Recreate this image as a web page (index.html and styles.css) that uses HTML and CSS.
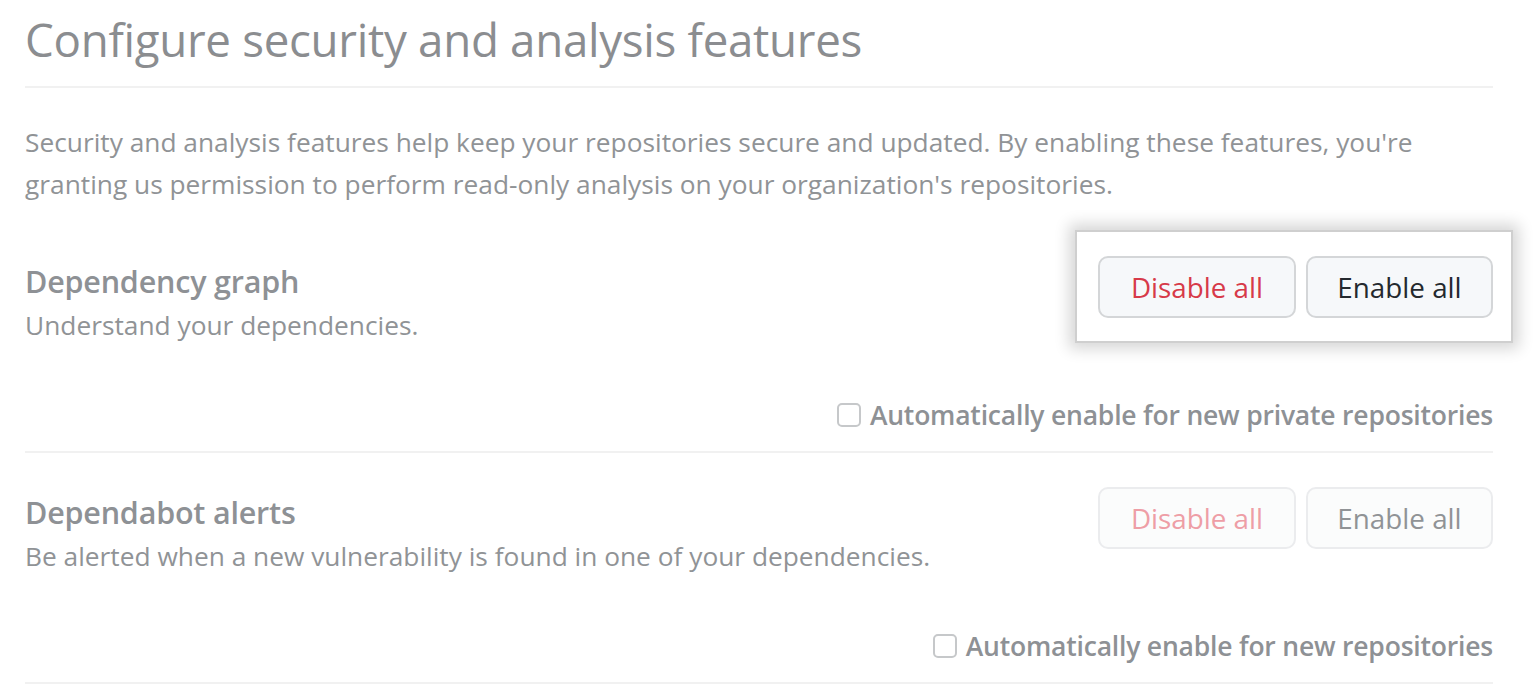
FILE: index.html
```html
<!DOCTYPE html>
<html>
<head>
<meta charset="utf-8">
<link rel="stylesheet" href="styles.css">
</head>
<body>
<div class="page">
  <h1 class="title">Configure security and analysis features</h1>
  <p class="intro">Security and analysis features help keep your repositories secure and updated. By enabling these features, you're granting us permission to perform read-only analysis on your organization's repositories.</p>

  <div class="section first">
    <div class="row">
      <div class="info">
        <h2 class="heading">Dependency graph</h2>
        <p class="desc">Understand your dependencies.</p>
      </div>
      <div class="buttons highlight">
        <button class="btn danger">Disable all</button>
        <button class="btn enable">Enable all</button>
      </div>
    </div>
    <label class="auto"><span class="box"></span>Automatically enable for new private repositories</label>
  </div>

  <div class="section">
    <div class="row">
      <div class="info">
        <h2 class="heading">Dependabot alerts</h2>
        <p class="desc">Be alerted when a new vulnerability is found in one of your dependencies.</p>
      </div>
      <div class="buttons faded">
        <button class="btn danger">Disable all</button>
        <button class="btn enable">Enable all</button>
      </div>
    </div>
    <label class="auto"><span class="box"></span>Automatically enable for new repositories</label>
  </div>
</div>
</body>
</html>
```

FILE: styles.css
```css
html, body {
  margin: 0;
  padding: 0;
  background: #ffffff;
}
body {
  font-family: "Open Sans", "Noto Sans", sans-serif;
  color: #8e9195;
}
.page {
  width: 1468px;
  margin-left: 25px;
}
.title {
  margin: 0;
  padding-top: 8px;
  font-size: 45.7px;
  line-height: 62px;
  font-weight: 400;
  color: #8b8d90;
  letter-spacing: -0.3px;
  border-bottom: 2px solid #f1f1f1;
  padding-bottom: 16px;
}
.intro {
  margin: 33px 0 0 0;
  font-size: 26.3px;
  line-height: 42px;
  color: #909396;
}
.section {
  border-bottom: 2px solid #f1f1f1;
  height: 229px;
  display: flex;
  flex-direction: column;
}
.section.first {
  margin-top: 17px;
}
.row {
  display: flex;
  justify-content: space-between;
  align-items: flex-start;
  padding-top: 34px;
}
.info {
  padding-top: 5px;
}
.heading {
  margin: 0;
  font-size: 30.5px;
  line-height: 40px;
  font-weight: 600;
  color: #8e9195;
  letter-spacing: -0.2px;
}
.desc {
  margin: 4px 0 0 0;
  font-size: 26.3px;
  line-height: 40px;
  color: #909396;
}
.buttons {
  display: flex;
  gap: 10px;
  position: relative;
}
.btn {
  font-family: inherit;
  font-size: 27.8px;
  font-weight: 400;
  height: 62px;
  padding: 0;
  border: 2px solid #d4d6d8;
  border-radius: 10px;
  background: #f6f8fa;
  color: #24292e;
  position: relative;
  z-index: 1;
}
.btn.danger {
  color: #d73a49;
  width: 198px;
}
.btn.enable {
  width: 187px;
}
.highlight::before {
  content: "";
  position: absolute;
  top: -26px;
  left: -23px;
  right: -20px;
  bottom: -25px;
  background: #ffffff;
  border: 2px solid #cfcfcf;
  box-shadow: 0 0 14px 6px rgba(0, 0, 0, 0.16);
}
.faded .btn {
  border-color: #ebecee;
  background: #fbfcfc;
  color: #909396;
}
.faded .btn.danger {
  color: #ee9ea6;
}
.auto {
  margin-top: auto;
  margin-bottom: 20px;
  align-self: flex-end;
  display: flex;
  align-items: center;
  gap: 9px;
  font-size: 26.5px;
  line-height: 32px;
  font-weight: 600;
  color: #8e9195;
  letter-spacing: -0.2px;
}
.box {
  width: 20px;
  height: 20px;
  border: 2px solid #c6c8ca;
  border-radius: 5px;
  background: #fff;
}
```
